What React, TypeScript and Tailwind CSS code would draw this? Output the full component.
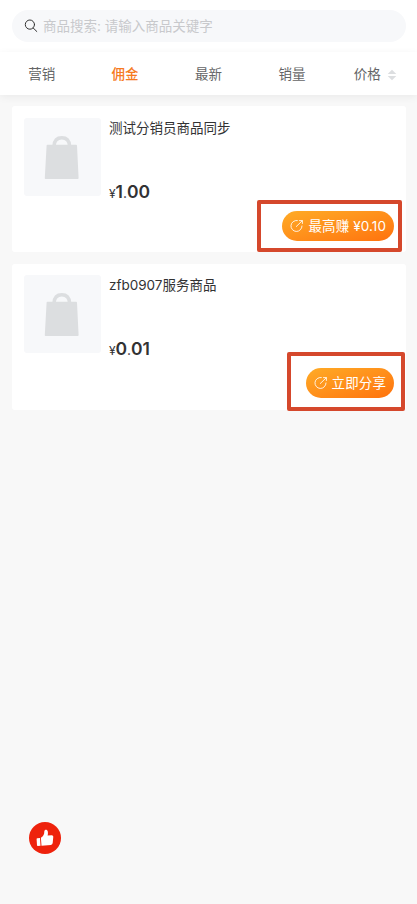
type Product = {
  title: string;
  price: [string, string];
  action: string;
};

const products: Product[] = [
  { title: '测试分销员商品同步', price: ['1', '00'], action: '最高赚 ¥0.10' },
  { title: 'zfb0907服务商品', price: ['0', '01'], action: '立即分享' },
];

function SearchIcon() {
  return (
    <svg className="size-[14px] shrink-0" viewBox="0 0 14 14" fill="none" stroke="#333" strokeWidth="1" strokeLinecap="round">
      <circle cx="5.9" cy="5.6" r="4.6" />
      <path d="M9.2 9 12.8 12.5" />
    </svg>
  );
}

function BagIcon() {
  return (
    <svg className="h-[44px] w-[36px]" viewBox="0 0 36 44">
      <path d="M10 11C10.300 5.300 13.300 2.700 17.800 2.700S25.300 5.300 25.600 11" fill="none" stroke="#dcdee0" strokeWidth="3.4" />
      <path d="M3.500 9.700h28.600q.8 0 .9.800L34.600 43q0 .9-.8.900H1.600q-.9 0-.8-.9L2.600 10.500q0-.8.9-.8Z" fill="#dcdee0" />
    </svg>
  );
}

function ShareIcon() {
  return (
    <svg className="size-[14px] shrink-0" viewBox="0 0 14 14" fill="none" stroke="#fff" strokeOpacity="0.9" strokeWidth="0.95" strokeLinecap="round" strokeLinejoin="round">
      <path d="M7.300 1.500A5.500 5.500 0 1 0 12 7" />
      <path d="M6.300 7.500 12.200 1.800M9.500 1.600h2.900v2.900" />
    </svg>
  );
}

function ProductCard({ product, highlight, nudge }: { product: Product; highlight: string; nudge: string }) {
  return (
    <article className={`relative flex h-[146px] rounded-[3px] bg-white pl-3 ${nudge}`}>
      <div className="flex h-[78px] w-[77px] shrink-0 items-center justify-center rounded-[3px] bg-[#f7f8fa] pr-px">
        <BagIcon />
      </div>
      <div className="flex min-w-0 flex-1 flex-col pl-2">
        <h2 className="h-[60px] text-[13.5px] leading-[20px] text-[#323233]">{product.title}</h2>
        <div className="flex h-[28px] items-baseline leading-[28px] text-[#323233]">
          <span className="text-[12px]">¥</span>
          <span className="text-[17.5px] font-semibold tracking-[-0.1px]">{product.price[0]}</span>
          <span className="text-[14px]">.</span>
          <span className="text-[17.5px] font-semibold tracking-[-0.1px]">{product.price[1]}</span>
        </div>
        <button className="mr-3 mt-[5px] flex h-[30px] items-center gap-[4px] self-end rounded-full bg-linear-to-br from-[#ffab26] to-[#ff720d] px-2 text-[13.5px] text-white">
          <ShareIcon />
          <span className="whitespace-nowrap tracking-[0.1px]">{product.action}</span>
        </button>
      </div>
      <div className={`absolute rounded-[2px] border-4 border-[#d5482c] ${highlight}`} />
    </article>
  );
}

export default function App() {
  return (
    <div className="relative min-h-[904px] w-[417px] overflow-hidden bg-[#f8f8f8] font-[Inter,'Noto_Sans_CJK_SC',sans-serif]">
      <header className="h-[52px] bg-white px-3 pt-[10px]">
        <div className="flex h-8 w-[394px] items-center gap-[5px] rounded-full bg-[#f7f8fa] pl-3">
          <SearchIcon />
          <span className="text-[13.5px] text-[#c8c9cc]">商品搜索: 请输入商品关键字</span>
        </div>
      </header>
      <nav className="grid h-[43px] grid-cols-5 bg-white pt-[2px] text-[13.5px] text-[#646566] shadow-[0_2px_8px_rgba(0,0,0,0.06)]">
        <div className="flex items-center justify-center">营销</div>
        <div className="flex items-center justify-center font-medium text-[#f67a1f]">佣金</div>
        <div className="flex items-center justify-center">最新</div>
        <div className="flex items-center justify-center">销量</div>
        <div className="flex items-center justify-center gap-[6px]">
          价格
          <svg className="h-[12px] w-[10px]" viewBox="0 0 10 12" fill="#dcdee0">
            <path d="M5 .7 9.300 5H.7ZM.7 7h8.600L5 11.300Z" />
          </svg>
        </div>
      </nav>
      <main className="flex w-[406px] flex-col gap-3 pl-3 pt-[11px]">
        <ProductCard product={products[0]} nudge="pt-3" highlight="left-[245px] top-[94px] h-[52px] w-[145px]" />
        <ProductCard product={products[1]} nudge="pt-[11px]" highlight="left-[275px] top-[88px] h-[59px] w-[118px]" />
      </main>
      <button className="absolute left-[29px] top-[822px] flex size-8 items-center justify-center rounded-full bg-[#ee220c]" aria-label="点赞">
        <svg className="size-[18px]" viewBox="0 0 18 18" fill="#fff">
          <path d="M1.300 9.200 4 8.900l.5 7.800-2.700.2q-.7 0-.8-.7L.6 10q0-.7.7-.8ZM4.900 8.700C7.500 7.300 8.300 5.300 8.300 2.500c.1-2.200 3-2.200 3.500-.1.300 1.600.1 2.900-.2 4.200l4.200-.3q1.500 0 1.500 1.500l-.6 6.300q-.2 1.700-1.800 1.900l-9.400.7Z" />
        </svg>
      </button>
    </div>
  );
}
